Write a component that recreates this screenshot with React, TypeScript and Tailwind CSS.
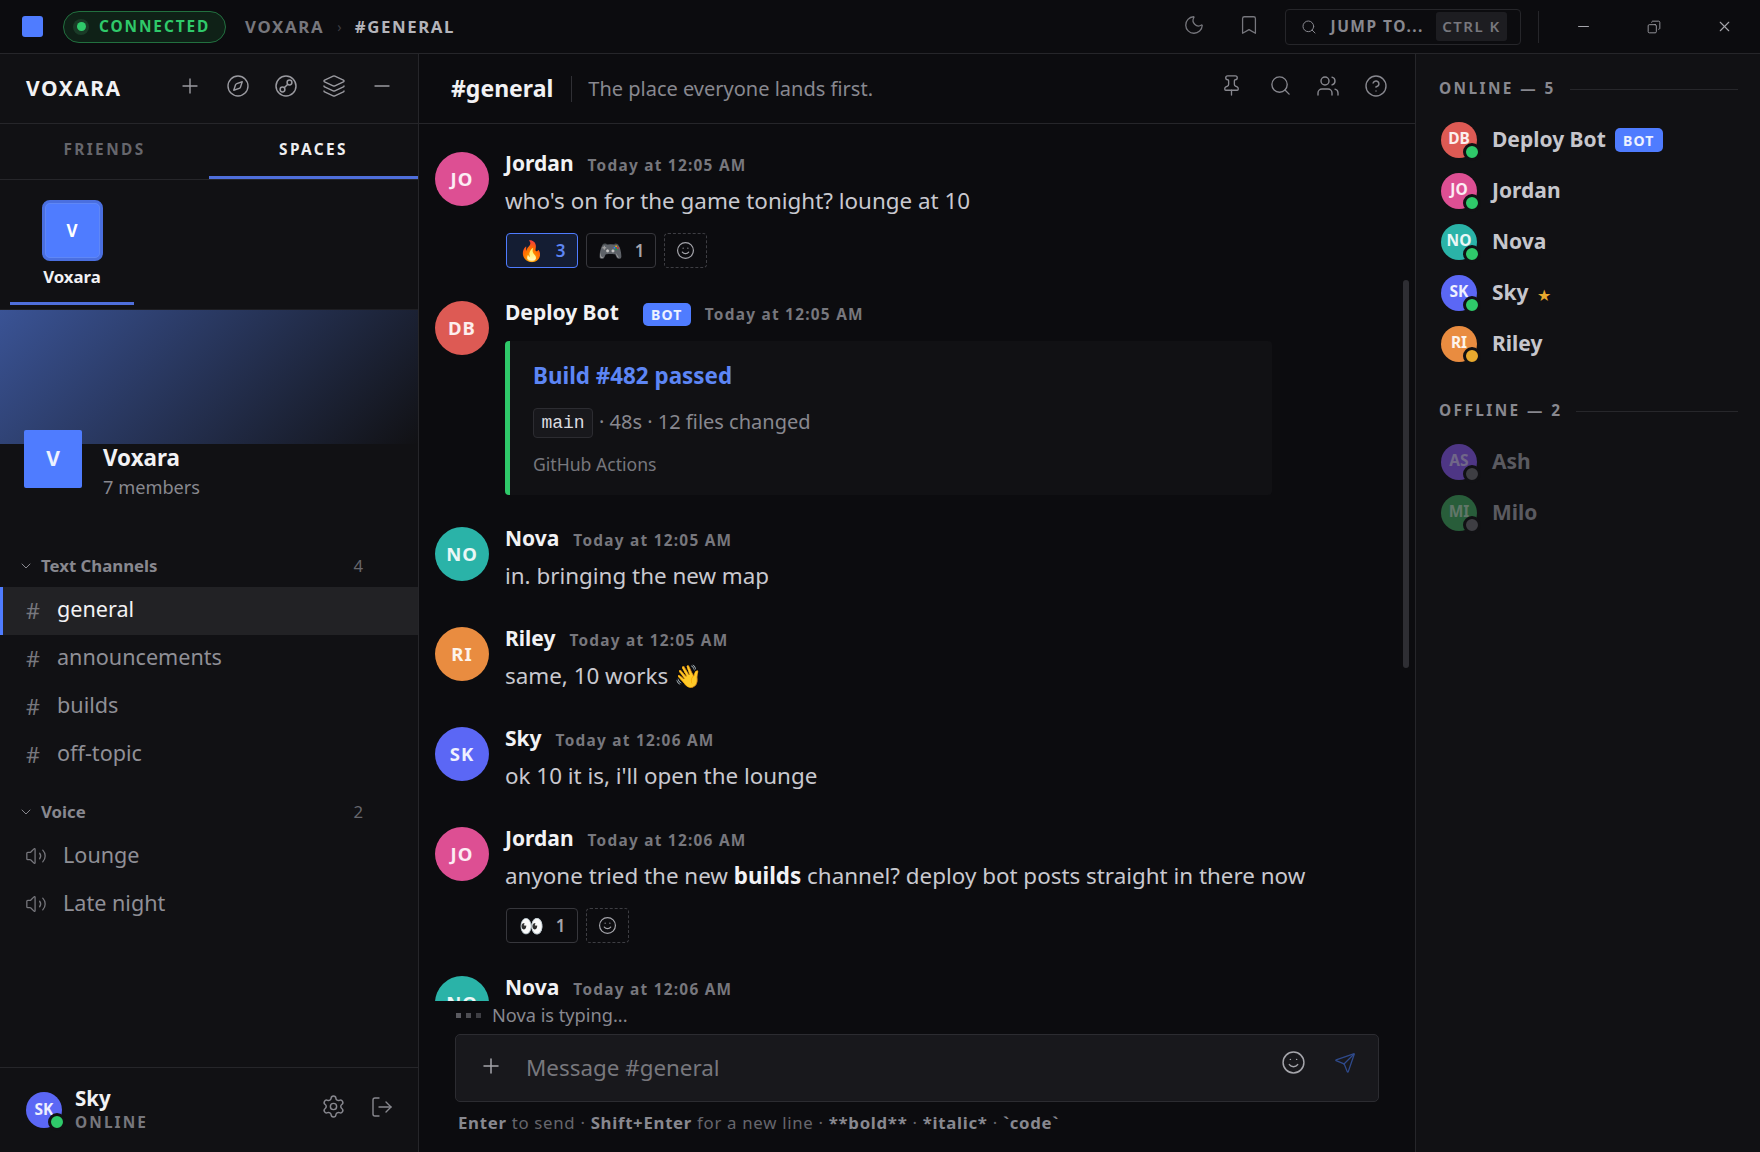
import type { ReactNode } from 'react'
import {
  Moon,
  Bookmark,
  Search,
  Minus,
  Copy,
  X,
  Plus,
  Compass,
  Layers,
  Pin,
  Users,
  CircleHelp,
  ChevronDown,
  Volume2,
  Settings,
  LogOut,
  Smile,
  Send,
} from 'lucide-react'

const CHANNELS = ['general', 'announcements', 'builds', 'off-topic']
const VOICE = ['Lounge', 'Late night']

function NodesIcon() {
  return (
    <svg width="24" height="24" viewBox="0 0 24 24" fill="none" stroke="currentColor" strokeWidth="1.5">
      <circle cx="12" cy="12" r="10" />
      <circle cx="15.5" cy="8.5" r="2.4" />
      <circle cx="8.5" cy="15.5" r="2.4" />
      <path d="M10.2 13.8l3.6-3.6" />
    </svg>
  )
}

function Avatar({ initials, color }: { initials: string; color: string }) {
  return (
    <div
      className={`w-[54px] h-[54px] rounded-full shrink-0 mt-[5px] pb-[1px] flex items-center justify-center text-[18.5px] font-bold tracking-[1px] text-white/90 ${color}`}
    >
      {initials}
    </div>
  )
}

function BotTag({ className }: { className: string }) {
  return (
    <span className={`bg-[#4f7cff] rounded-[5px] flex items-center justify-center font-bold tracking-[1.2px] text-white/90 text-[14px] ${className}`}>
      BOT
    </span>
  )
}

function Message({
  name,
  time,
  initials,
  color,
  bot,
  children,
}: {
  name: string
  time: string
  initials: string
  color: string
  bot?: boolean
  children?: ReactNode
}) {
  return (
    <div className="flex gap-[16px] pb-[26px]">
      <Avatar initials={initials} color={color} />
      <div className="flex-1 min-w-0 pt-[1px] -mb-[1px]">
        <div className="flex items-center h-[32px]">
          <span className="text-[21px] font-bold text-[#f2f2f4]">{name}</span>
          {bot && <BotTag className="w-[48px] h-[23px] ml-[24px] mt-[2px]" />}
          <span className="ml-[14px] text-[15.4px] font-bold tracking-[1.25px] text-[#77777d] mt-[4px]">
            {time}
          </span>
        </div>
        {children}
      </div>
    </div>
  )
}

function Text({ children }: { children: ReactNode }) {
  return <div className="h-[42px] flex items-center text-[22.4px] text-[#c9c9cf] whitespace-pre">{children}</div>
}

function Reaction({ emoji, count, active }: { emoji: string; count: number; active?: boolean }) {
  return (
    <div
      className={`h-[35px] rounded-[4px] border flex items-center justify-center gap-[12px] text-[17px] font-semibold ${
        active
          ? 'w-[72px] border-[#4f7cff] bg-[#141d33] text-[#5d86f5]'
          : emoji === '👀'
            ? 'w-[72px] border-[#37373c] text-[#a5a5ab]'
            : 'w-[70px] border-[#37373c] text-[#a5a5ab]'
      }`}
    >
      <span className="text-[20px] leading-none">{emoji}</span>
      <span>{count}</span>
    </div>
  )
}

function AddReaction() {
  return (
    <div className="w-[43px] h-[35px] rounded-[4px] border border-dashed border-[#3e3e43] flex items-center justify-center text-[#a5a5ab]">
      <Smile size={19} strokeWidth={1.5} />
    </div>
  )
}

function SectionLabel({ label }: { label: string }) {
  return (
    <div className="flex items-center gap-[14px] h-[24px]">
      <span className="text-[15.4px] font-bold tracking-[2.4px] text-[#88888f] whitespace-nowrap">{label}</span>
      <div className="flex-1 h-px bg-[#27272b]" />
    </div>
  )
}

function Member({
  initials,
  color,
  name,
  dot,
  offline,
  children,
}: {
  initials: string
  color: string
  name: string
  dot: string
  offline?: boolean
  children?: ReactNode
}) {
  return (
    <div className="h-[51px] flex items-center pl-[2px]">
      <div className="relative w-[36px] h-[36px] shrink-0">
        <div
          className={`w-full h-full rounded-full flex items-center justify-center text-[15.5px] font-bold pb-[2px] ${color} ${
            offline ? 'opacity-50 text-white/60' : 'text-white/90'
          }`}
        >
          {initials}
        </div>
        <div className={`absolute -right-[4px] -bottom-[3px] w-[18px] h-[18px] rounded-full border-[3px] border-[#111114] ${dot}`} />
      </div>
      <span className={`ml-[15px] text-[21px] font-bold ${offline ? 'text-[#5a5a60]' : 'text-[#c6c6cc]'}`}>{name}</span>
      {children}
    </div>
  )
}

export default function App() {
  return (
    <div className="h-screen w-full flex flex-col overflow-hidden bg-[#0c0c0f] font-['Noto_Sans',sans-serif]">
      {/* Title bar */}
      <div className="h-[54px] shrink-0 flex items-center border-b border-[#26262a] pl-[22px]">
        <div className="w-[21px] h-[21px] rounded-[3px] bg-[#4f7cff]" />
        <div className="ml-[20px] w-[163px] h-[32px] rounded-full border border-[#22703f] bg-[#0f2117] flex items-center pl-[9px]">
          <div className="w-[16px] h-[16px] rounded-full bg-[#1a3b27] flex items-center justify-center">
            <div className="w-[9px] h-[9px] rounded-full bg-[#2fc96a]" />
          </div>
          <span className="ml-[10px] text-[15.4px] font-bold tracking-[1.9px] text-[#2fc96a]">CONNECTED</span>
        </div>
        <span className="ml-[19px] text-[16.8px] font-bold tracking-[1.7px] text-[#77777d]">VOXARA</span>
        <span className="ml-[13px] text-[14px] text-[#3e3e43]">›</span>
        <span className="ml-[13px] text-[16.8px] font-bold tracking-[1.6px] text-[#b4b4ba]">#GENERAL</span>
        <div className="flex-1" />
        <Moon size={22} strokeWidth={1.4} className="text-[#77777d] mb-[4px]" />
        <Bookmark size={22} strokeWidth={1.4} className="text-[#77777d] ml-[33px] mb-[4px]" />
        <div className="ml-[25px] w-[236px] h-[36px] rounded-[4px] border border-[#26262a] flex items-center pl-[15px] text-[#88888f]">
          <Search size={16} strokeWidth={1.5} />
          <span className="ml-[14px] text-[15.5px] font-bold tracking-[1.5px]">JUMP TO...</span>
          <span className="ml-[12px] w-[71px] h-[29px] rounded-[3px] bg-[#1d1d21] flex items-center justify-center text-[15px] font-semibold tracking-[1.5px] text-[#77777d]">
            CTRL K
          </span>
        </div>
        <div className="ml-[17px] w-px h-[32px] bg-[#26262a]" />
        <div className="ml-[10px] flex items-center text-[#a5a5ab]">
          <div className="w-[70.5px] flex justify-center"><Minus size={17} strokeWidth={1.5} /></div>
          <div className="w-[70.5px] flex justify-center"><Copy size={14} strokeWidth={1.5} className="-scale-x-100" /></div>
          <div className="w-[70.5px] flex justify-center"><X size={17} strokeWidth={1.5} /></div>
        </div>
      </div>

      <div className="flex-1 min-h-0 flex">
        {/* Left sidebar */}
        <div className="w-[419px] shrink-0 bg-[#111114] border-r border-[#26262a] flex flex-col">
          <div className="h-[70px] shrink-0 border-b border-[#26262a] flex items-center pl-[26px] pr-[24px] text-[#9a9aa0]">
            <span className="text-[21px] font-bold tracking-[1.5px] text-[#f2f2f4] flex-1 mt-[1px]">VOXARA</span>
            <div className="flex items-center gap-[24px] mb-[6px]">
              <Plus size={24} strokeWidth={1.4} />
              <Compass size={24} strokeWidth={1.4} />
              <NodesIcon />
              <Layers size={24} strokeWidth={1.4} />
              <Minus size={24} strokeWidth={1.4} />
            </div>
          </div>
          <div className="h-[56px] shrink-0 flex border-b border-[#26262a]">
            <div className="w-[209px] flex items-center justify-center text-[15.4px] font-bold tracking-[2.4px] text-[#66666c] border-b-[3px] border-transparent">FRIENDS</div>
            <div className="flex-1 flex items-center justify-center text-[15.4px] font-bold tracking-[2.4px] text-[#eeeef0] border-b-[3px] border-[#4f6fdc]">SPACES</div>
          </div>
          <div className="h-[130px] shrink-0 pl-[10px] border-b border-[#1e1e22]">
            <div className="w-[124px] h-[125px] border-b-[3px] border-[#4f6fdc] flex flex-col items-center pt-[20px]">
              <div className="w-[61px] h-[61px] rounded-[8px] bg-[#4f7cff] border-[3px] border-[#4a6fe0] outline outline-1 -outline-offset-4 outline-[#6b8ff0]/60 flex items-center justify-center text-[17px] font-bold text-white">
                V
              </div>
              <span className="mt-[3px] text-[16.8px] font-bold text-[#f2f2f4]">Voxara</span>
            </div>
          </div>
          {/* Banner */}
          <div className="h-[134px] shrink-0 bg-[linear-gradient(135deg,#3a5395,#111114)]" />
          <div className="h-[100px] shrink-0 flex pl-[24px]">
            <div className="w-[58px] h-[58px] -mt-[14px] rounded-[2px] bg-[#4f7cff] flex items-center justify-center text-[21px] font-bold text-white/90">V</div>
            <div className="ml-[21px]">
              <div className="text-[22.4px] font-bold text-[#f2f2f4] leading-[30px] -mt-[1px]">Voxara</div>
              <div className="text-[18.2px] text-[#88888f] leading-[26px] mt-[1px]">7 members</div>
            </div>
          </div>
          {/* Channels */}
          <div className="flex-1 min-h-0">
            <div className="h-[43px] flex items-center pl-[18px] pr-[55px] text-[#88888f]">
              <ChevronDown size={16} strokeWidth={1.5} />
              <span className="ml-[7px] flex-1 text-[16.8px] font-bold">Text Channels</span>
              <span className="text-[16.8px] font-normal text-[#66666c]">4</span>
            </div>
            {CHANNELS.map((c, i) => (
              <div
                key={c}
                className={
                  i === 0
                    ? 'h-[48px] flex items-center pl-[23px] border-l-[3px] border-[#4f7cff] bg-[#222225] text-[21.6px] text-[#f2f2f4]'
                    : 'h-[48px] flex items-center pl-[26px] text-[21.6px] text-[#8f8f96]'
                }
              >
                <span className="w-[31px] text-[#77777d]">#</span>
                <span className="pb-[4px]">{c}</span>
              </div>
            ))}
            <div className="h-[39px] mt-[13px] flex items-center pl-[18px] pr-[55px] text-[#88888f]">
              <ChevronDown size={16} strokeWidth={1.5} />
              <span className="ml-[7px] flex-1 text-[16.8px] font-bold">Voice</span>
              <span className="text-[16.8px] font-normal text-[#66666c]">2</span>
            </div>
            {VOICE.map((v) => (
              <div key={v} className="h-[48px] flex items-center pl-[25px] text-[21.6px] text-[#8f8f96]">
                <Volume2 size={22} strokeWidth={1.4} className="text-[#77777d] mt-[2px]" />
                <span className="ml-[16px]">{v}</span>
              </div>
            ))}
          </div>
          {/* User */}
          <div className="h-[85px] shrink-0 border-t border-[#26262a] flex items-center pl-[26px] pr-[24px]">
            <div className="relative w-[36px] h-[36px] shrink-0">
              <div className="w-full h-full rounded-full bg-[#5b67f5] flex items-center justify-center text-[15.5px] font-bold text-white/90">SK</div>
              <div className="absolute -right-[4px] -bottom-[3px] w-[18px] h-[18px] rounded-full border-[3px] border-[#111114] bg-[#2fc96a]" />
            </div>
            <div className="ml-[13px] flex-1">
              <div className="text-[20.5px] font-bold text-[#f2f2f4] leading-[24px] -mt-[2px]">Sky</div>
              <div className="text-[15.4px] font-bold tracking-[2.1px] text-[#77777d] leading-[21px] mt-[2px]">ONLINE</div>
            </div>
            <Settings size={25} strokeWidth={1.4} className="text-[#88888f] mb-[7px]" />
            <LogOut size={24} strokeWidth={1.4} className="ml-[24px] text-[#88888f] mb-[7px]" />
          </div>
        </div>

        {/* Main column */}
        <div className="flex-1 min-w-0 flex flex-col">
          <div className="h-[70px] shrink-0 border-b border-[#26262a] flex items-center pl-[32px] pr-[27px]">
            <span className="text-[23px] font-bold text-[#f2f2f4]">#general</span>
            <div className="w-px h-[26px] bg-[#303035] ml-[18px] mr-[16px]" />
            <span className="flex-1 text-[20px] text-[#88888f]">The place everyone lands first.</span>
            <div className="flex items-center gap-[24px] text-[#88888f] mb-[6px]">
              <Pin size={23} strokeWidth={1.4} className="mr-[2px]" />
              <Search size={23} strokeWidth={1.4} />
              <Users size={24} strokeWidth={1.4} />
              <CircleHelp size={24} strokeWidth={1.4} />
            </div>
          </div>

          <div className="relative flex-1 min-h-0 overflow-hidden pt-[23px] pl-[16px] pr-[24px]">
            <div className="pb-[3px]">
              <Message name="Jordan" time="Today at 12:05 AM" initials="JO" color="bg-[#dd4f93]">
                <Text>who's on for the game tonight? lounge at 10</Text>
                <div className="mt-[11px] ml-[1px] flex gap-[8px]">
                  <Reaction emoji="🔥" count={3} active />
                  <Reaction emoji="🎮" count={1} />
                  <AddReaction />
                </div>
              </Message>
            </div>
            <Message name="Deploy Bot" time="Today at 12:05 AM" initials="DB" color="bg-[#dd5a54]" bot>
              <div className="mt-[12px] mb-[2px] w-[767px] h-[154px] bg-[#111114] rounded-[4px] border-l-[5px] border-[#2fc96a] pl-[23px] pt-[20px]">
                <div className="text-[22.4px] font-bold leading-[30px] text-[#5d86f5]">Build #482 passed</div>
                <div className="mt-[16px] flex items-center h-[32px] text-[20px] text-[#88888f]">
                  <span className="h-[30px] w-[60px] rounded-[4px] border border-[#2c2c31] bg-[#18181c] flex items-center justify-center text-[#dcdce0] text-[18px] font-['Liberation_Mono',monospace]">main</span>
                  <span className="ml-[6px] mb-[3px]">· 48s · 12 files changed</span>
                </div>
                <div className="mt-[13px] text-[17.6px] leading-[24px] text-[#77777d]">GitHub Actions</div>
              </div>
            </Message>
            <Message name="Nova" time="Today at 12:05 AM" initials="NO" color="bg-[#2ab3a8]">
              <Text>in. bringing the new map</Text>
            </Message>
            <Message name="Riley" time="Today at 12:05 AM" initials="RI" color="bg-[#e98c40]">
              <Text>same, 10 works 👋</Text>
            </Message>
            <Message name="Sky" time="Today at 12:06 AM" initials="SK" color="bg-[#5b67f5]">
              <Text>ok 10 it is, i'll open the lounge</Text>
            </Message>
            <div className="pb-[3px]">
              <Message name="Jordan" time="Today at 12:06 AM" initials="JO" color="bg-[#dd4f93]">
                <Text>
                  anyone tried the new <b className="font-bold text-[#f2f2f4]">builds</b> channel? deploy bot posts straight in there now
                </Text>
                <div className="mt-[11px] ml-[1px] flex gap-[8px]">
                  <Reaction emoji="👀" count={1} />
                  <AddReaction />
                </div>
              </Message>
            </div>
            <Message name="Nova" time="Today at 12:06 AM" initials="NO" color="bg-[#2ab3a8]" />
            <div className="absolute right-[6px] top-[156px] w-[6px] h-[388px] rounded-full bg-[#2e2e33]" />
          </div>

          <div className="h-[29px] mb-[4px] shrink-0 flex items-center pl-[37px] text-[18.2px] text-[#88888f]">
            <div className="flex gap-[5px] mr-[11px]">
              <div className="w-[5px] h-[5px] bg-[#5a5a60]" />
              <div className="w-[5px] h-[5px] bg-[#4d4d52]" />
              <div className="w-[5px] h-[5px] bg-[#3e3e43]" />
            </div>
            Nova is typing...
          </div>
          <div className="h-[68px] shrink-0 mx-[36px] rounded-[5px] border border-[#2c2c31] bg-[#18181c] flex items-center pl-[23px] pr-[22px]">
            <Plus size={24} strokeWidth={1.5} className="text-[#a5a5ab] mb-[5px]" />
            <span className="ml-[23px] flex-1 text-[22.4px] text-[#77777d]">Message #general</span>
            <Smile size={25} strokeWidth={1.4} className="text-[#a5a5ab] mb-[11px]" />
            <Send size={22} strokeWidth={1.4} className="ml-[28px] text-[#2f4a8c] mb-[10px]" />
          </div>
          <div className="h-[41px] mb-[9px] shrink-0 flex items-center pl-[39px] text-[16.8px] tracking-[0.7px] text-[#66666c] whitespace-pre">
            <b className="font-bold text-[#88888f]">Enter</b> to send · <b className="font-bold text-[#88888f]">Shift+Enter</b> for a new line · <b className="font-bold text-[#88888f]">**bold**</b> · <b className="font-bold text-[#88888f]">*italic*</b> · <b className="font-bold text-[#88888f]">`code`</b>
          </div>
        </div>

        {/* Members */}
        <div className="w-[345px] shrink-0 bg-[#111114] border-l border-[#26262a] pl-[23px] pr-[22px] pt-[23px]">
          <SectionLabel label="ONLINE — 5" />
          <div className="mt-[13px]">
            <Member initials="DB" color="bg-[#dd5a54]" name="Deploy Bot" dot="bg-[#2fc96a]">
              <BotTag className="w-[48px] h-[24px] ml-[9px] mt-[1px]" />
            </Member>
            <Member initials="JO" color="bg-[#dd4f93]" name="Jordan" dot="bg-[#2fc96a]" />
            <Member initials="NO" color="bg-[#2ab3a8]" name="Nova" dot="bg-[#2fc96a]" />
            <Member initials="SK" color="bg-[#5b67f5]" name="Sky" dot="bg-[#2fc96a]">
              <span className="ml-[8px] mt-[4px] text-[16px] text-[#e8a92e]">★</span>
            </Member>
            <Member initials="RI" color="bg-[#e98c40]" name="Riley" dot="bg-[#e8a92e]" />
          </div>
          <div className="mt-[30px]">
            <SectionLabel label="OFFLINE — 2" />
          </div>
          <div className="mt-[13px]">
            <Member initials="AS" color="bg-[#8b5cf6]" name="Ash" dot="bg-[#3e3e43]" offline />
            <Member initials="MI" color="bg-[#3fa860]" name="Milo" dot="bg-[#3e3e43]" offline />
          </div>
        </div>
      </div>
    </div>
  )
}
